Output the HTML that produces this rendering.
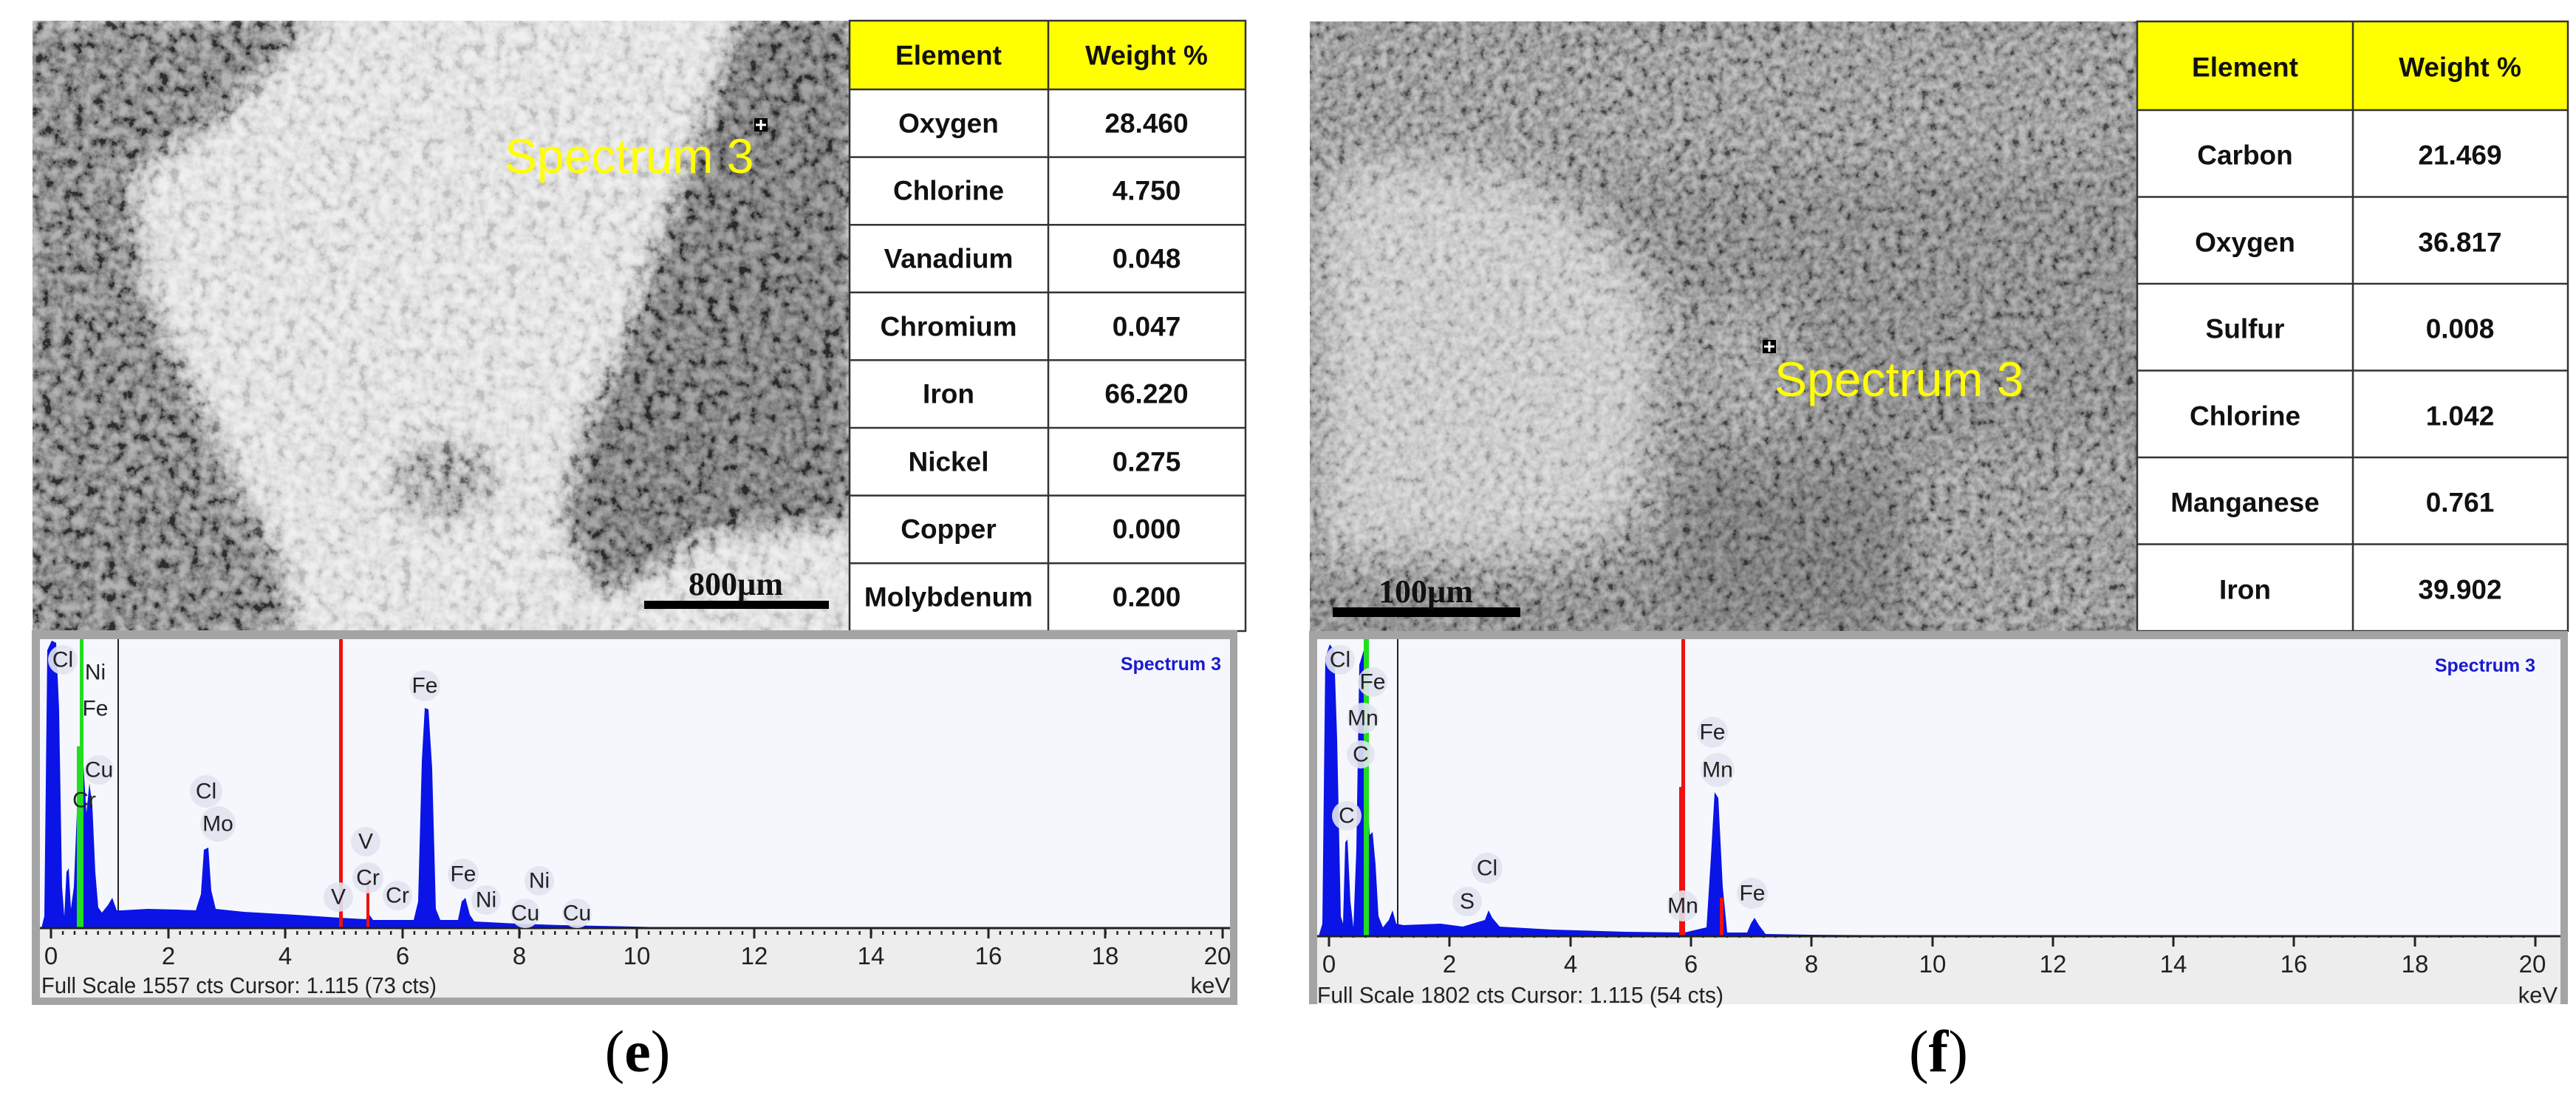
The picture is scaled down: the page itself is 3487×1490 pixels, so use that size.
<!DOCTYPE html>
<html><head><meta charset="utf-8"><style>
html,body{margin:0;padding:0;background:#fff;}
svg{display:block;}
text{font-family:"Liberation Sans",sans-serif;}
.tb{font-weight:bold;font-size:37px;fill:#111;text-anchor:middle;dominant-baseline:central;}
.ax{font-size:33px;fill:#222;text-anchor:middle;}
.pl{font-size:30px;fill:#222;text-anchor:middle;dominant-baseline:central;}
.fs{font-size:31px;fill:#222;}
</style></head><body>
<svg width="3487" height="1490" viewBox="0 0 3487 1490" xmlns="http://www.w3.org/2000/svg">
<defs>
<filter id="noise" x="0" y="0" width="100%" height="100%">
<feTurbulence type="fractalNoise" baseFrequency="0.07" numOctaves="4" seed="3"/>
<feColorMatrix type="matrix" values="2.2 0 0 0 -0.6  2.2 0 0 0 -0.6  2.2 0 0 0 -0.6  0 0 0 0 1"/>
</filter>
<filter id="noise2" x="0" y="0" width="100%" height="100%">
<feTurbulence type="fractalNoise" baseFrequency="0.09" numOctaves="4" seed="9"/>
<feColorMatrix type="matrix" values="1.8 0 0 0 -0.4  1.8 0 0 0 -0.4  1.8 0 0 0 -0.4  0 0 0 0 1"/>
</filter>
<filter id="blur"><feGaussianBlur stdDeviation="14"/></filter>
<filter id="blur2"><feGaussianBlur stdDeviation="30"/></filter>
<clipPath id="c1"><rect x="44" y="28" width="1106" height="826"/></clipPath>
<clipPath id="c2"><rect x="1773" y="29" width="1120" height="825"/></clipPath>
<pattern id="tk1" patternUnits="userSpaceOnUse" x="68" y="0" width="15.86" height="20"><rect x="0" y="0" width="2.5" height="9" fill="#222"/></pattern>
<pattern id="tk2" patternUnits="userSpaceOnUse" x="1798" y="0" width="16.33" height="20"><rect x="0" y="0" width="2.5" height="9" fill="#222"/></pattern>
</defs>

<!-- LEFT SEM -->
<g clip-path="url(#c1)">
<rect x="44" y="28" width="1106" height="826" fill="#d8d8d8"/>
<g filter="url(#blur)">
<polygon points="30,20 440,20 300,160 180,240 200,400 260,520 320,650 380,760 400,870 30,870" fill="#707070"/>
<polygon points="1000,20 1160,20 1160,710 960,725 860,790 800,800 760,700 790,580 850,450 900,300 960,140" fill="#686868"/>
<ellipse cx="600" cy="650" rx="70" ry="55" fill="#9a9a9a"/>
</g>
<rect x="44" y="28" width="1106" height="826" filter="url(#noise)" style="mix-blend-mode:overlay" opacity="0.6"/>
</g>
<text x="683" y="234" font-size="66" fill="#ffff00">Spectrum 3</text>
<rect x="1021" y="160" width="18" height="18" fill="#000"/><path d="M1030 162v14M1023 169h14" stroke="#fff" stroke-width="3"/>
<rect x="872" y="813" width="250" height="11" fill="#000"/>
<text x="996" y="805" font-size="44" font-weight="bold" text-anchor="middle" style="font-family:'Liberation Serif',serif" fill="#111">800µm</text>

<!-- LEFT TABLE -->
<rect x="1150" y="28" width="536" height="93" fill="#ffff00"/>
<rect x="1150" y="121" width="536" height="733" fill="#fff"/>
<g stroke="#333" stroke-width="2.5" fill="none">
<rect x="1150" y="28" width="536" height="826"/>
<line x1="1419" y1="28" x2="1419" y2="854"/>
<line x1="1150" y1="121" x2="1686" y2="121"/>
<line x1="1150" y1="212.6" x2="1686" y2="212.6"/>
<line x1="1150" y1="304.2" x2="1686" y2="304.2"/>
<line x1="1150" y1="395.8" x2="1686" y2="395.8"/>
<line x1="1150" y1="487.4" x2="1686" y2="487.4"/>
<line x1="1150" y1="579" x2="1686" y2="579"/>
<line x1="1150" y1="670.6" x2="1686" y2="670.6"/>
<line x1="1150" y1="762.2" x2="1686" y2="762.2"/>
</g>
<text class="tb" x="1284" y="75">Element</text><text class="tb" x="1552" y="75">Weight %</text>
<text class="tb" x="1284" y="167">Oxygen</text><text class="tb" x="1552" y="167">28.460</text>
<text class="tb" x="1284" y="258">Chlorine</text><text class="tb" x="1552" y="258">4.750</text>
<text class="tb" x="1284" y="350">Vanadium</text><text class="tb" x="1552" y="350">0.048</text>
<text class="tb" x="1284" y="442">Chromium</text><text class="tb" x="1552" y="442">0.047</text>
<text class="tb" x="1284" y="533">Iron</text><text class="tb" x="1552" y="533">66.220</text>
<text class="tb" x="1284" y="625">Nickel</text><text class="tb" x="1552" y="625">0.275</text>
<text class="tb" x="1284" y="716">Copper</text><text class="tb" x="1552" y="716">0.000</text>
<text class="tb" x="1284" y="808">Molybdenum</text><text class="tb" x="1552" y="808">0.200</text>

<!-- LEFT SPECTRUM -->
<rect x="43" y="853" width="1632" height="507" fill="#a4a4a4"/>
<rect x="54" y="865" width="1611" height="391" fill="#f5f7fd"/>
<rect x="54" y="1256" width="1611" height="94" fill="#ededed"/>
<line x1="160" y1="865" x2="160" y2="1256" stroke="#222" stroke-width="2"/>
<path d="M56,1256 L60,1240 L64,880 L70,867 L76,870 L80,960 L84,1200 L87,1240 L90,1180 L93,1175 L96,1230 L100,1200 L106,1050 L112,1020 L117,1100 L121,1060 L125,1090 L129,1180 L133,1228 L138,1235 L146,1225 L152,1215 L158,1232 L165,1232 L200,1230 L240,1231 L265,1232 L272,1210 L276,1150 L282,1147 L286,1205 L292,1230 L330,1234 L400,1238 L460,1242 L495,1244 L500,1238 L505,1245 L560,1245 L566,1220 L571,1030 L575,958 L580,960 L585,1040 L590,1230 L596,1245 L620,1245 L625,1220 L630,1215 L636,1238 L642,1247 L700,1250 L760,1252 L860,1254 L900,1255 L1655,1255 L1655,1256 Z" fill="#0a14e6"/>
<rect x="108" y="865" width="5" height="391" fill="#22dd22"/>
<rect x="104" y="1010" width="5" height="246" fill="#22dd22"/>
<rect x="459" y="865" width="5" height="391" fill="#ee1111"/>
<rect x="496" y="1190" width="4" height="66" fill="#ee1111"/>
<line x1="54" y1="1256" x2="1665" y2="1256" stroke="#222" stroke-width="3"/>
<rect x="66" y="1256" width="1592" height="9" fill="url(#tk1)"/>
<g stroke="#222" stroke-width="3">
<line x1="69" y1="1256" x2="69" y2="1270"/><line x1="228" y1="1256" x2="228" y2="1270"/><line x1="386" y1="1256" x2="386" y2="1270"/><line x1="545" y1="1256" x2="545" y2="1270"/><line x1="703" y1="1256" x2="703" y2="1270"/><line x1="862" y1="1256" x2="862" y2="1270"/><line x1="1021" y1="1256" x2="1021" y2="1270"/><line x1="1179" y1="1256" x2="1179" y2="1270"/><line x1="1338" y1="1256" x2="1338" y2="1270"/><line x1="1496" y1="1256" x2="1496" y2="1270"/><line x1="1655" y1="1256" x2="1655" y2="1270"/>
</g>
<text class="ax" x="69" y="1305">0</text><text class="ax" x="228" y="1305">2</text><text class="ax" x="386" y="1305">4</text><text class="ax" x="545" y="1305">6</text><text class="ax" x="703" y="1305">8</text><text class="ax" x="862" y="1305">10</text><text class="ax" x="1021" y="1305">12</text><text class="ax" x="1179" y="1305">14</text><text class="ax" x="1338" y="1305">16</text><text class="ax" x="1496" y="1305">18</text><text class="ax" x="1648" y="1305">20</text>
<text class="fs" x="56" y="1344" textLength="535" lengthAdjust="spacingAndGlyphs">Full Scale 1557 cts Cursor: 1.115  (73 cts)</text>
<text class="fs" x="1665" y="1344" text-anchor="end">keV</text>
<text x="1653" y="907" font-size="25" font-weight="bold" fill="#1a1acc" text-anchor="end" style="font-family:'Liberation Sans Narrow','Liberation Sans',sans-serif">Spectrum 3</text>
<g fill="#e2e4f0" opacity="0.9">
<circle cx="85" cy="893" r="20"/><circle cx="279" cy="1071" r="22"/><circle cx="295" cy="1115" r="24"/><circle cx="495" cy="1139" r="20"/><circle cx="498" cy="1188" r="21"/><circle cx="458" cy="1214" r="20"/><circle cx="538" cy="1212" r="20"/><circle cx="575" cy="928" r="21"/><circle cx="627" cy="1183" r="21"/><circle cx="658" cy="1218" r="20"/><circle cx="730" cy="1192" r="20"/><circle cx="711" cy="1236" r="20"/><circle cx="781" cy="1236" r="20"/><circle cx="134" cy="1042" r="20"/>
</g>
<text class="pl" x="85" y="893">Cl</text><text class="pl" x="129" y="910">Ni</text><text class="pl" x="129" y="959">Fe</text><text class="pl" x="134" y="1042">Cu</text><text class="pl" x="114" y="1083">Cr</text>
<text class="pl" x="279" y="1071">Cl</text><text class="pl" x="295" y="1115">Mo</text><text class="pl" x="495" y="1139">V</text><text class="pl" x="498" y="1188">Cr</text><text class="pl" x="458" y="1214">V</text><text class="pl" x="538" y="1212">Cr</text><text class="pl" x="575" y="928">Fe</text><text class="pl" x="627" y="1183">Fe</text><text class="pl" x="658" y="1218">Ni</text><text class="pl" x="730" y="1192">Ni</text><text class="pl" x="711" y="1236">Cu</text><text class="pl" x="781" y="1236">Cu</text>

<!-- RIGHT SEM -->
<g clip-path="url(#c2)">
<rect x="1773" y="29" width="1120" height="825" fill="#777"/>
<g filter="url(#blur2)">
<rect x="1773" y="29" width="1120" height="200" fill="#858585"/>
<path d="M1785,250 C1880,200 2020,220 2100,260 C2170,300 2230,360 2245,430 C2250,520 2230,620 2215,700 C2150,760 2000,770 1900,750 L1785,760 Z" fill="#bdbdbd"/>
<rect x="2290" y="420" width="130" height="150" fill="#8e8e8e"/>
<rect x="2600" y="600" width="293" height="254" fill="#838383"/>
<rect x="2270" y="640" width="300" height="214" fill="#6a6a6a"/>
</g>
<rect x="1773" y="29" width="1120" height="825" filter="url(#noise2)" style="mix-blend-mode:overlay" opacity="0.5"/>
</g>
<text x="2402" y="536" font-size="66" fill="#ffff00">Spectrum 3</text>
<rect x="2386" y="460" width="18" height="18" fill="#000"/><path d="M2395 462v14M2388 469h14" stroke="#fff" stroke-width="3"/>
<rect x="1804" y="822" width="254" height="13" fill="#000"/>
<text x="1930" y="815" font-size="44" font-weight="bold" text-anchor="middle" style="font-family:'Liberation Serif',serif" fill="#111">100µm</text>

<!-- RIGHT TABLE -->
<rect x="2893" y="29" width="583" height="120" fill="#ffff00"/>
<rect x="2893" y="149" width="583" height="705" fill="#fff"/>
<g stroke="#333" stroke-width="2.5" fill="none">
<rect x="2893" y="29" width="583" height="825"/>
<line x1="3185" y1="29" x2="3185" y2="854"/>
<line x1="2893" y1="149" x2="3476" y2="149"/>
<line x1="2893" y1="266.5" x2="3476" y2="266.5"/>
<line x1="2893" y1="384" x2="3476" y2="384"/>
<line x1="2893" y1="501.5" x2="3476" y2="501.5"/>
<line x1="2893" y1="619" x2="3476" y2="619"/>
<line x1="2893" y1="736.5" x2="3476" y2="736.5"/>
</g>
<text class="tb" x="3039" y="91">Element</text><text class="tb" x="3330" y="91">Weight %</text>
<text class="tb" x="3039" y="210">Carbon</text><text class="tb" x="3330" y="210">21.469</text>
<text class="tb" x="3039" y="328">Oxygen</text><text class="tb" x="3330" y="328">36.817</text>
<text class="tb" x="3039" y="445">Sulfur</text><text class="tb" x="3330" y="445">0.008</text>
<text class="tb" x="3039" y="563">Chlorine</text><text class="tb" x="3330" y="563">1.042</text>
<text class="tb" x="3039" y="680">Manganese</text><text class="tb" x="3330" y="680">0.761</text>
<text class="tb" x="3039" y="798">Iron</text><text class="tb" x="3330" y="798">39.902</text>

<!-- RIGHT SPECTRUM -->
<rect x="1772" y="854" width="1704" height="505" fill="#a4a4a4"/>
<rect x="1783" y="865" width="1683" height="402" fill="#f5f7fd"/>
<rect x="1783" y="1267" width="1683" height="92" fill="#ededed"/>
<line x1="1892" y1="865" x2="1892" y2="1267" stroke="#222" stroke-width="2"/>
<path d="M1785,1267 L1790,1250 L1794,890 L1800,872 L1806,880 L1810,1000 L1815,1240 L1818,1250 L1821,1140 L1824,1136 L1828,1220 L1832,1255 L1836,1150 L1840,900 L1846,880 L1850,1060 L1854,1130 L1858,1126 L1862,1170 L1866,1240 L1872,1255 L1880,1245 L1885,1232 L1890,1250 L1900,1252 L1950,1250 L1980,1254 L2010,1245 L2015,1232 L2020,1242 L2030,1254 L2100,1258 L2200,1261 L2280,1262 L2310,1255 L2316,1160 L2321,1072 L2326,1080 L2332,1200 L2338,1262 L2365,1262 L2370,1250 L2375,1242 L2381,1252 L2390,1264 L2450,1265 L2600,1266 L3432,1266 L3432,1267 Z" fill="#0a14e6"/>
<rect x="1846" y="865" width="7" height="402" fill="#22dd22"/>
<rect x="2276" y="865" width="5" height="402" fill="#ee1111"/>
<rect x="2273" y="1065" width="4" height="202" fill="#ee1111"/>
<rect x="2328" y="1215" width="5" height="52" fill="#ee1111"/>
<line x1="1783" y1="1267" x2="3466" y2="1267" stroke="#222" stroke-width="3"/>
<rect x="1796" y="1267" width="1640" height="9" fill="url(#tk2)"/>
<g stroke="#222" stroke-width="3">
<line x1="1799" y1="1267" x2="1799" y2="1281"/><line x1="1962" y1="1267" x2="1962" y2="1281"/><line x1="2126" y1="1267" x2="2126" y2="1281"/><line x1="2289" y1="1267" x2="2289" y2="1281"/><line x1="2452" y1="1267" x2="2452" y2="1281"/><line x1="2616" y1="1267" x2="2616" y2="1281"/><line x1="2779" y1="1267" x2="2779" y2="1281"/><line x1="2942" y1="1267" x2="2942" y2="1281"/><line x1="3105" y1="1267" x2="3105" y2="1281"/><line x1="3269" y1="1267" x2="3269" y2="1281"/><line x1="3432" y1="1267" x2="3432" y2="1281"/>
</g>
<text class="ax" x="1799" y="1316">0</text><text class="ax" x="1962" y="1316">2</text><text class="ax" x="2126" y="1316">4</text><text class="ax" x="2289" y="1316">6</text><text class="ax" x="2452" y="1316">8</text><text class="ax" x="2616" y="1316">10</text><text class="ax" x="2779" y="1316">12</text><text class="ax" x="2942" y="1316">14</text><text class="ax" x="3105" y="1316">16</text><text class="ax" x="3269" y="1316">18</text><text class="ax" x="3428" y="1316">20</text>
<text class="fs" x="1783" y="1357" textLength="550" lengthAdjust="spacingAndGlyphs">Full Scale 1802 cts Cursor: 1.115  (54 cts)</text>
<text class="fs" x="3462" y="1357" text-anchor="end">keV</text>
<text x="3432" y="909" font-size="25" font-weight="bold" fill="#1a1acc" text-anchor="end" style="font-family:'Liberation Sans Narrow','Liberation Sans',sans-serif">Spectrum 3</text>
<g fill="#e2e4f0" opacity="0.9">
<circle cx="1814" cy="893" r="20"/><circle cx="1858" cy="923" r="20"/><circle cx="1845" cy="972" r="21"/><circle cx="1842" cy="1021" r="19"/><circle cx="1823" cy="1104" r="20"/><circle cx="2013" cy="1175" r="21"/><circle cx="1986" cy="1220" r="20"/><circle cx="2278" cy="1226" r="21"/><circle cx="2318" cy="991" r="21"/><circle cx="2325" cy="1042" r="23"/><circle cx="2372" cy="1209" r="21"/>
</g>
<text class="pl" x="1814" y="893">Cl</text><text class="pl" x="1858" y="923">Fe</text><text class="pl" x="1845" y="972">Mn</text><text class="pl" x="1842" y="1021">C</text><text class="pl" x="1823" y="1104">C</text><text class="pl" x="2013" y="1175">Cl</text><text class="pl" x="1986" y="1220">S</text><text class="pl" x="2278" y="1226">Mn</text><text class="pl" x="2318" y="991">Fe</text><text class="pl" x="2325" y="1042">Mn</text><text class="pl" x="2372" y="1209">Fe</text>

<text x="863" y="1450" font-size="80" text-anchor="middle" style="font-family:'Liberation Serif',serif" fill="#000">(<tspan font-weight="bold">e</tspan>)</text>
<text x="2624" y="1450" font-size="80" text-anchor="middle" style="font-family:'Liberation Serif',serif" fill="#000">(<tspan font-weight="bold">f</tspan>)</text>
</svg>
</body></html>
